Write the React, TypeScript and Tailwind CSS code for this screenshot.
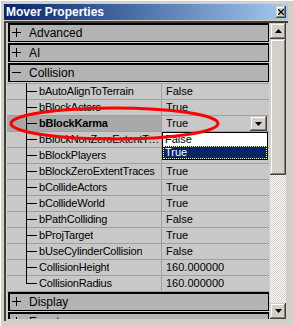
import React from "react";

const props: [string, string][] = [
  ["bAutoAlignToTerrain", "False"],
  ["bBlockActors", "True"],
  ["bBlockKarma", "True"],
  ["bBlockNonZeroExtentTraces", ""],
  ["bBlockPlayers", "True"],
  ["bBlockZeroExtentTraces", "True"],
  ["bCollideActors", "True"],
  ["bCollideWorld", "True"],
  ["bPathColliding", "False"],
  ["bProjTarget", "True"],
  ["bUseCylinderCollision", "False"],
  ["CollisionHeight", "160.000000"],
  ["CollisionRadius", "160.000000"],
];

function Sign({ plus }: { plus: boolean }) {
  return (
    <svg width="9" height="9" viewBox="0 0 9 9" className="shrink-0">
      <line x1="0" y1="4.5" x2="9" y2="4.5" stroke="#000" strokeWidth="1" />
      {plus && <line x1="4.5" y1="0" x2="4.5" y2="9" stroke="#000" strokeWidth="1" />}
    </svg>
  );
}

function Category({ label, open }: { label: string; open?: boolean }) {
  return (
    <div className="h-[20px] pr-[1px] pl-[2px] pb-[1px]">
      <div className="h-[19px] border border-black bg-[#b4b4b4] flex items-center pl-[3px] shadow-[inset_1px_1px_#000]">
        <Sign plus={!open} />
        <span className="ml-[8px] text-[12px] leading-none">{label}</span>
      </div>
    </div>
  );
}

const raised =
  "bg-[#d4d0c8] shadow-[inset_-1px_-1px_#404040,inset_1px_1px_#d4d0c8,inset_-2px_-2px_#808080,inset_2px_2px_#ffffff]";

function Arrow({ up }: { up: boolean }) {
  return (
    <svg width="7" height="4" viewBox="0 0 7 4">
      {up ? <polygon points="3.5,0 7,4 0,4" fill="#000" /> : <polygon points="0,0 7,0 3.5,4" fill="#000" />}
    </svg>
  );
}

export default function App() {
  return (
    <div className="relative w-[293px] h-[326px] bg-[#d4d0c8] overflow-hidden font-['Liberation_Sans',Arial,sans-serif] text-black shadow-[inset_1px_1px_#ffffff]">
      <div className="pt-[4px] pl-[4px]">
        {/* title bar */}
        <div className="w-[284px] h-[16px] bg-gradient-to-r from-[#0a246a] to-[#a6caf0] flex items-center justify-between pl-[2px] pr-[2px]">
          <span className="text-white font-bold text-[12px] leading-none">Mover Properties</span>
          <div className={`w-[10px] h-[12px] ${raised} flex items-center justify-center`}>
            <svg width="6" height="6" viewBox="0 0 6 6">
              <path d="M0 0 L6 6 M6 0 L0 6" stroke="#000" strokeWidth="1.3" />
            </svg>
          </div>
        </div>
        {/* content */}
        <div className="mt-[1px] w-[284px] h-[300px] border-t-[2px] border-l-[2px] border-t-[#404040] border-l-[#404040] flex">
          <div className="w-[264px] h-[296px] relative overflow-hidden bg-[#d4d0c8] text-[11px]">
            <Category label="Advanced" />
            <Category label="AI" />
            <Category label="Collision" open />
            <div className="relative ml-[1px] w-[262px]">
              {props.map(([name, value]) => {
                const sel = name === "bBlockKarma";
                return (
                  <div key={name} className="h-[16px] border-t border-[#a0a0a0] flex bg-[#c8c8c8]">
                    <div className={`w-[155px] border-r border-[#a0a0a0] flex items-center pl-[32px] ${sel ? "bg-[#a8a8a8] font-bold" : ""}`}>
                      <span className="whitespace-nowrap overflow-hidden text-ellipsis tracking-[-0.2px] leading-none">{name}</span>
                    </div>
                    <div className="flex-1 flex items-center pl-[4px] pr-[2px] justify-between">
                      <span className="leading-none">{value}</span>
                      {sel && (
                        <div className={`w-[17px] h-[15px] ${raised} flex items-center justify-center`}>
                          <Arrow up={false} />
                        </div>
                      )}
                    </div>
                  </div>
                );
              })}
              <div className="h-[1px] bg-[#a0a0a0]" />
              <svg className="absolute left-0 top-0" width="40" height="220">
                <line x1="19.5" y1="0" x2="19.5" y2="201" stroke="#000" />
                {props.map((_, i) => (
                  <line key={i} x1="19.5" y1={8.5 + i * 16} x2="30" y2={8.5 + i * 16} stroke="#000" />
                ))}
              </svg>
              {/* dropdown list */}
              <div className="absolute left-[155px] top-[49px] w-[106px] h-[28px] border border-black bg-white text-[11px]">
                <div className="h-[13px] flex items-center pl-[2px] leading-none">False</div>
                <div className="h-[13px] flex items-center pl-[2px] bg-[#0a246a] text-white outline-1 outline-dotted outline-[#ffff80] -outline-offset-1 leading-none">True</div>
              </div>
            </div>
            <Category label="Display" />
            <Category label="Events" />
          </div>
          {/* scrollbar */}
          <div className="w-[16px] h-[296px] flex flex-col">
            <div className={`h-[16px] ${raised} flex items-center justify-center`}>
              <Arrow up />
            </div>
            <div className={`h-[136px] ${raised}`} />
            <div className="flex-1 bg-[repeating-conic-gradient(#d4d0c8_0_25%,#ffffff_0_50%)] bg-[length:2px_2px]" />
            <div className={`h-[16px] ${raised} flex items-center justify-center`}>
              <Arrow up={false} />
            </div>
          </div>
        </div>
      </div>
      <svg className="absolute left-0 top-0 pointer-events-none" width="293" height="326">
        <ellipse cx="114.5" cy="123.5" rx="103.5" ry="15.5" fill="none" stroke="#ff0000" strokeWidth="3" />
      </svg>
    </div>
  );
}
